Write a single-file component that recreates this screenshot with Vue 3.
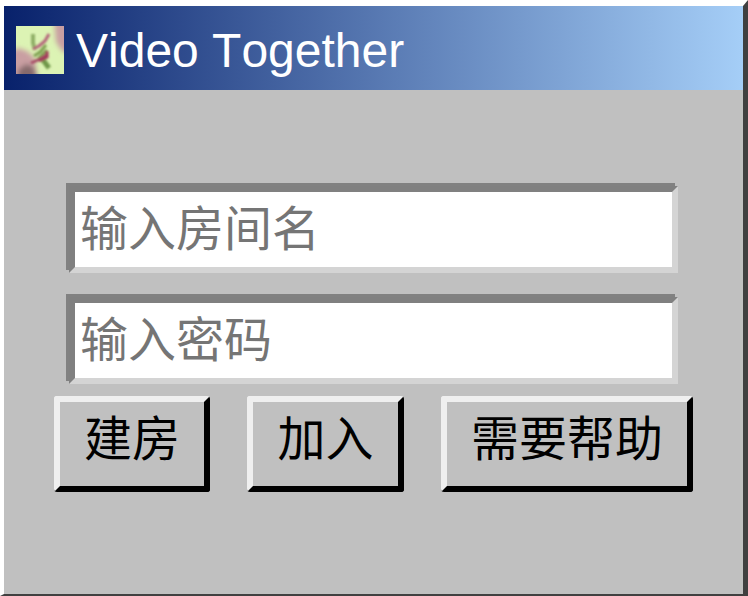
<script setup>
import { ref } from 'vue'

const room = ref('')
const password = ref('')
</script>

<template>
  <main class="window">
    <header class="title-bar">
      <svg class="logo" viewBox="0 0 48 48" aria-hidden="true">
        <defs>
          <filter id="soft" x="-30%" y="-30%" width="160%" height="160%">
            <feGaussianBlur stdDeviation="1.3" />
          </filter>
          <filter id="softer" x="-30%" y="-30%" width="160%" height="160%">
            <feGaussianBlur stdDeviation="2.6" />
          </filter>
        </defs>
        <rect width="48" height="48" fill="#dcf3b4" />
        <g filter="url(#softer)">
          <path d="M38 -6H56V29L46 25L40 16Z" fill="#c99fa2" />
          <path d="M-6 26L2 22L11 25L19 32L20 42L22 54H-6Z" fill="#c99fa2" />
          <path d="M2 44L10 38L18 41L21 54H2Z" fill="#866a6c" />
        </g>
        <g filter="url(#soft)" fill="none">
          <path d="M17 8V17L19 24" stroke="#8fae66" stroke-width="4" />
          <path d="M27 34L33 42" stroke="#6f9648" stroke-width="5" />
          <path d="M17 23L23 20L29 15L33 8" stroke="#b4637a" stroke-width="3" />
          <path d="M18 30L24 26L30 19M22 33L31 24" stroke="#7d9f50" stroke-width="3" />
          <path d="M15 37L24 33L32 28" stroke="#a64864" stroke-width="3" />
          <path d="M23 35L31 31V25" stroke="#a23a5a" stroke-width="3" />
        </g>
      </svg>
      <h1>Video Together</h1>
    </header>
    <form class="content" @submit.prevent>
      <input v-model="room" class="field" type="text" placeholder="输入房间名" aria-label="输入房间名" />
      <input v-model="password" class="field" type="text" placeholder="输入密码" aria-label="输入密码" />
      <div class="actions">
        <button type="button">建房</button>
        <button type="button">加入</button>
        <button type="button">需要帮助</button>
      </div>
    </form>
  </main>
</template>

<style>
body {
  background: #fff;
}
</style>

<style scoped>
.window {
  box-sizing: border-box;
  min-height: 100vh;
  display: flex;
  flex-direction: column;
  border: solid;
  border-width: 6px 5px 2px 4px;
  border-color: #fff #404040 #404040 #fff;
  background: #c0c0c0;
  font-family: "Liberation Sans", "Noto Sans CJK SC", sans-serif;
}
.title-bar {
  box-sizing: border-box;
  display: flex;
  align-items: center;
  gap: 12px;
  height: 84px;
  padding: 4px 12px 0;
  background: linear-gradient(90deg, #08216b, #a5cef7);
}
.logo {
  width: 48px;
  height: 48px;
  flex: none;
}
h1 {
  margin: 0;
  padding-top: 2px;
  color: #fff;
  font-size: 48px;
  line-height: 56px;
  font-weight: 400;
  font-kerning: none;
}
.content {
  display: flex;
  flex-direction: column;
  gap: 24px;
  padding: 96px 50px 24px;
}
.field {
  box-sizing: border-box;
  height: 87px;
  min-width: 0;
  margin: 0 15px;
  padding: 0 5px 10px;
  border: 6px solid;
  border-color: #808080 #d4d4d4 #d4d4d4 #808080;
  border-radius: 0;
  outline: none;
  box-shadow: -3px -3px #818181;
  background: #fff;
  color: #000;
  font: 48px "Noto Sans CJK SC", sans-serif;
}
.field::placeholder {
  color: #757575;
  opacity: 1;
}
.actions {
  display: flex;
  justify-content: space-between;
  margin-top: -12px;
}
button {
  box-sizing: border-box;
  height: 96px;
  padding: 0 24px 18px;
  border: 6px solid;
  border-color: #efefef #000 #000 #efefef;
  border-radius: 3px;
  background: #c0c0c0;
  color: #000;
  font: 48px "Noto Sans CJK SC", sans-serif;
  line-height: 66px;
  white-space: nowrap;
}
</style>
